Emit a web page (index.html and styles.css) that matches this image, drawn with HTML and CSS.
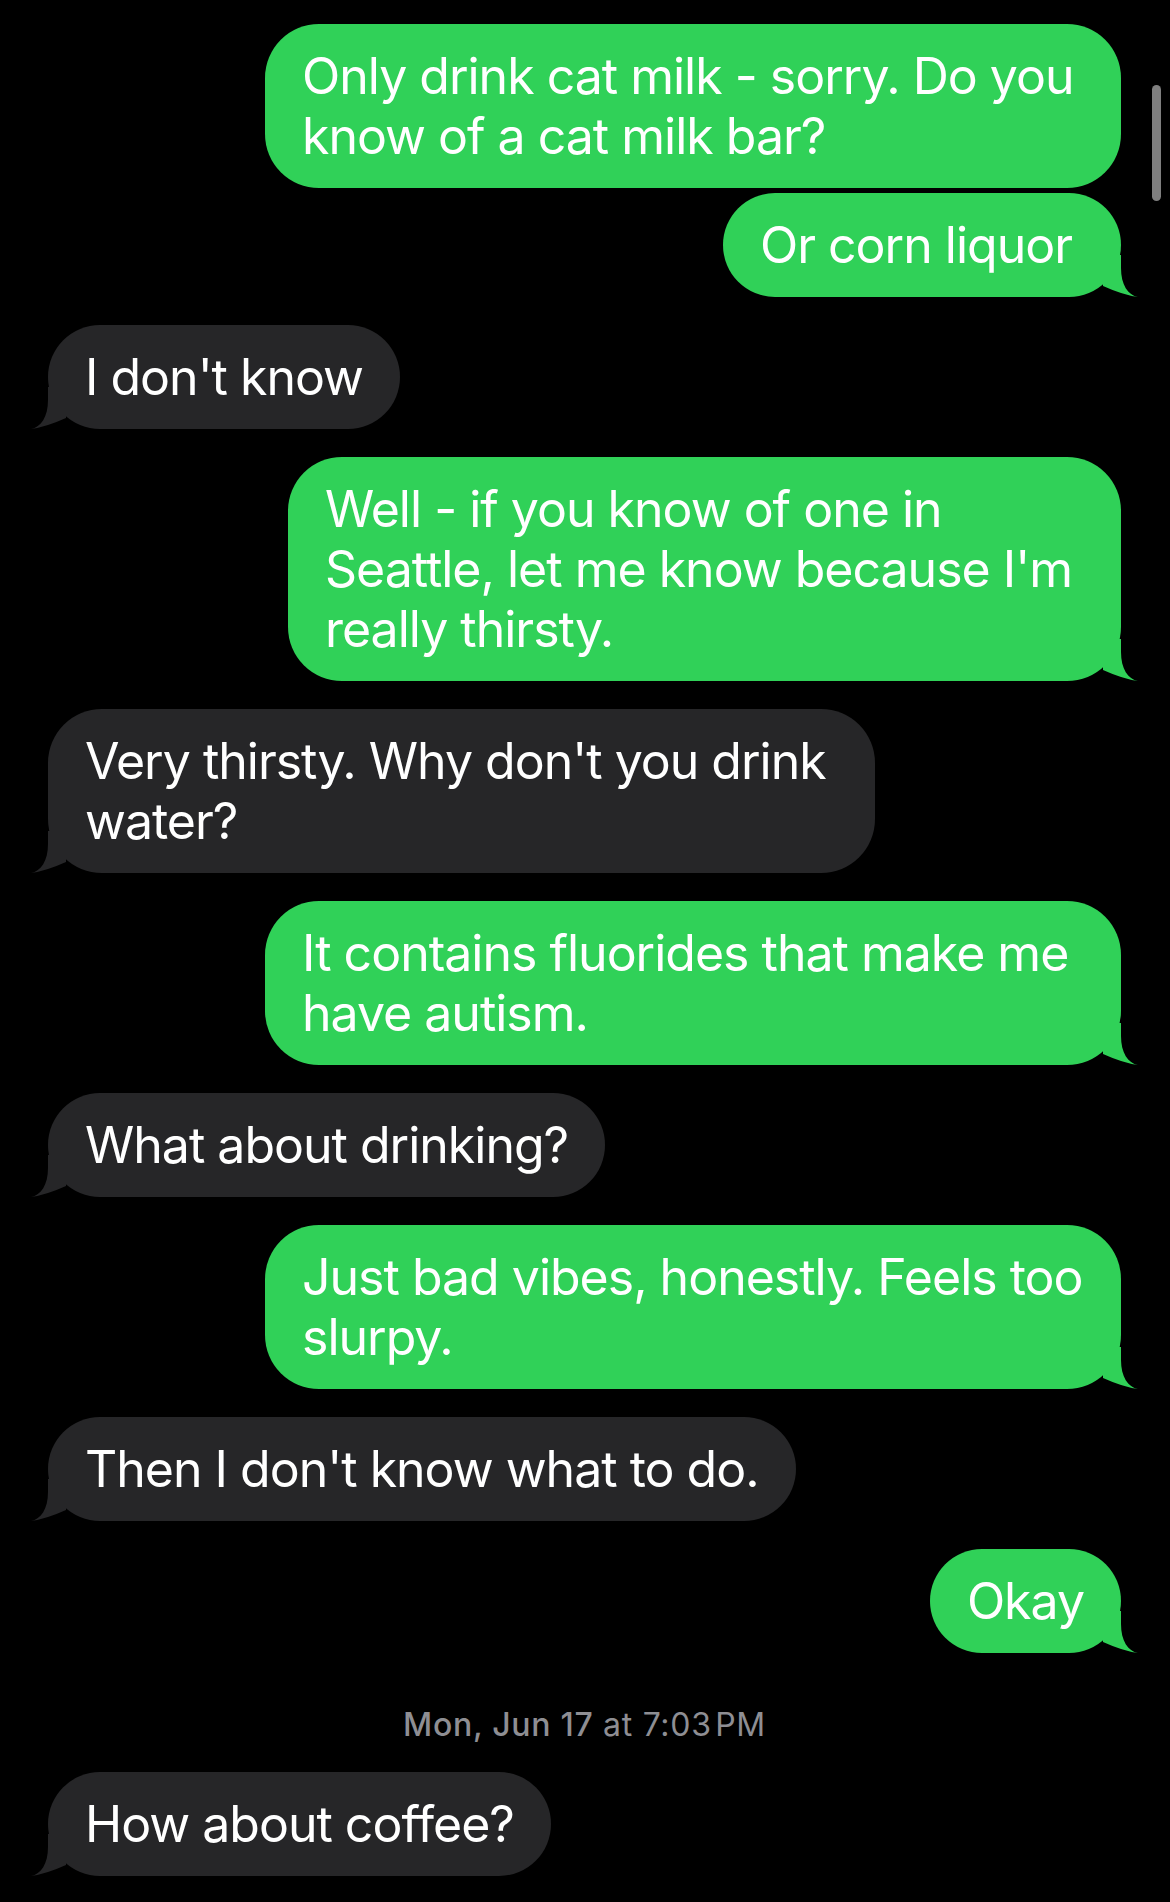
FILE: index.html
```html
<!DOCTYPE html>
<html lang="en">
<head>
<meta charset="utf-8">
<title>Messages</title>
<link rel="stylesheet" href="styles.css">
</head>
<body>
<main class="thread">
  <div class="row sent">
    <div class="bubble wide">Only drink cat milk - sorry. Do you<br>know of a cat milk bar?</div>
  </div>
  <div class="row sent tight">
    <div class="bubble roomy">Or corn liquor<svg class="tail" viewBox="0 0 38 42"><path d="M2 31 Q22 40 37 42 C27 40 20 30 20 13 L20 0 L2 0 Z"/></svg></div>
  </div>
  <div class="row recv">
    <div class="bubble">I don't know<svg class="tail" viewBox="0 0 38 42"><path d="M2 31 Q22 40 37 42 C27 40 20 30 20 13 L20 0 L2 0 Z"/></svg></div>
  </div>
  <div class="row sent">
    <div class="bubble roomy">Well - if you know of one in<br>Seattle, let me know because I'm<br>really thirsty.<svg class="tail" viewBox="0 0 38 42"><path d="M2 31 Q22 40 37 42 C27 40 20 30 20 13 L20 0 L2 0 Z"/></svg></div>
  </div>
  <div class="row recv">
    <div class="bubble roomy">Very thirsty. Why don't you drink<br>water?<svg class="tail" viewBox="0 0 38 42"><path d="M2 31 Q22 40 37 42 C27 40 20 30 20 13 L20 0 L2 0 Z"/></svg></div>
  </div>
  <div class="row sent">
    <div class="bubble wide">It contains fluorides that make me<br>have autism.<svg class="tail" viewBox="0 0 38 42"><path d="M2 31 Q22 40 37 42 C27 40 20 30 20 13 L20 0 L2 0 Z"/></svg></div>
  </div>
  <div class="row recv">
    <div class="bubble">What about drinking?<svg class="tail" viewBox="0 0 38 42"><path d="M2 31 Q22 40 37 42 C27 40 20 30 20 13 L20 0 L2 0 Z"/></svg></div>
  </div>
  <div class="row sent">
    <div class="bubble wide">Just bad vibes, honestly. Feels too<br>slurpy.<svg class="tail" viewBox="0 0 38 42"><path d="M2 31 Q22 40 37 42 C27 40 20 30 20 13 L20 0 L2 0 Z"/></svg></div>
  </div>
  <div class="row recv">
    <div class="bubble">Then I don't know what to do.<svg class="tail" viewBox="0 0 38 42"><path d="M2 31 Q22 40 37 42 C27 40 20 30 20 13 L20 0 L2 0 Z"/></svg></div>
  </div>
  <div class="row sent">
    <div class="bubble">Okay<svg class="tail" viewBox="0 0 38 42"><path d="M2 31 Q22 40 37 42 C27 40 20 30 20 13 L20 0 L2 0 Z"/></svg></div>
  </div>
  <div class="timestamp"><span class="ts-date">Mon, Jun 17</span> at 7:03&#8202;PM</div>
  <div class="row recv first-after-ts">
    <div class="bubble">How about coffee?<svg class="tail" viewBox="0 0 38 42"><path d="M2 31 Q22 40 37 42 C27 40 20 30 20 13 L20 0 L2 0 Z"/></svg></div>
  </div>
</main>
<div class="scrollbar"></div>
</body>
</html>
```
FILE: styles.css
```css
html, body {
  margin: 0;
  padding: 0;
  background: #000;
}

body {
  width: 1170px;
  height: 1902px;
  overflow: hidden;
  font-family: Inter, "Noto Sans", "Liberation Sans", sans-serif;
  color: #fff;
  position: relative;
}

.thread {
  display: flex;
  flex-direction: column;
  padding: 24px 49px 0 48px;
}

.row {
  display: flex;
  margin-top: 28px;
}

.row:first-child {
  margin-top: 0;
}

.row.tight {
  margin-top: 5px;
}

.row.sent {
  justify-content: flex-end;
}

.row.recv {
  justify-content: flex-start;
}

.row.first-after-ts {
  margin-top: 29px;
}

.bubble {
  position: relative;
  box-sizing: border-box;
  padding: 22px 37px 22px 37px;
  font-size: 50px;
  line-height: 60px;
  letter-spacing: -1px;
  border-radius: 54px;
  white-space: nowrap;
}

.bubble.roomy {
  padding-right: 49px;
}

.sent .bubble {
  background: #30d158;
}

.recv .bubble {
  background: #262628;
}

.bubble.wide {
  width: 856px;
}

.tail {
  position: absolute;
  bottom: 0;
  width: 38px;
  height: 42px;
  display: block;
}

.sent .tail {
  right: -18px;
  fill: #30d158;
}

.recv .tail {
  left: -18px;
  fill: #262628;
  transform: scaleX(-1);
}

.timestamp {
  margin-top: 54px;
  text-align: center;
  font-size: 32px;
  line-height: 36px;
  color: #8e8e93;
  letter-spacing: 0.7px;
}

.ts-date {
  font-weight: 500;
}

.scrollbar {
  position: absolute;
  top: 85px;
  left: 1152px;
  width: 9px;
  height: 116px;
  border-radius: 5px;
  background: #7f7f7f;
}
```
